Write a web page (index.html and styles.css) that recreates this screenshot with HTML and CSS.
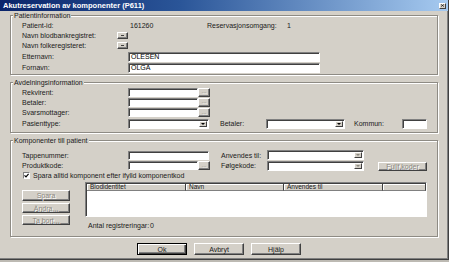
FILE: index.html
```html
<!DOCTYPE html>
<html lang="no">
<head>
<meta charset="utf-8">
<title>Akutreservation av komponenter (P611)</title>
<link rel="stylesheet" href="styles.css">
</head>
<body>
<div class="window">
  <div class="titlebar">
    <span class="title">Akutreservation av komponenter (P611)</span>
    <span class="close"><svg width="5" height="4" viewBox="0 0 5 4"><path d="M0 0L5 4M5 0L0 4" stroke="#000" stroke-width="1"/></svg></span>
  </div>
  <div class="content">
    <section class="group g1">
      <div class="gtitle">Patientinformation</div>
      <div class="row h10">
        <span class="lbl">Patient-id:</span>
        <span class="val">161260</span>
        <span class="lbl2">Reservasjonsomgang:</span>
        <span>1</span>
      </div>
      <div class="row h10">
        <span class="lbl short">Navn blodbankregistret:</span>
        <span class="btn mini"><i class="dash"></i></span>
      </div>
      <div class="row h11">
        <span class="lbl short">Navn folkeregisteret:</span>
        <span class="btn mini"><i class="dash"></i></span>
      </div>
      <div class="row h11">
        <span class="lbl">Etternavn:</span>
        <span class="input wname">OLESEN</span>
      </div>
      <div class="row h11">
        <span class="lbl">Fornavn:</span>
        <span class="input wname">OLGA</span>
      </div>
    </section>

    <section class="group g2">
      <div class="gtitle">Avdelningsinformation</div>
      <div class="row h10">
        <span class="lbl">Rekvirent:</span>
        <span class="input w70"></span><span class="btn dots disabled">...</span>
      </div>
      <div class="row h10">
        <span class="lbl">Betaler:</span>
        <span class="input w70"></span><span class="btn dots disabled">...</span>
      </div>
      <div class="row h11">
        <span class="lbl">Svarsmottager:</span>
        <span class="input w70"></span><span class="btn dots disabled">...</span>
      </div>
      <div class="row h11">
        <span class="lbl">Pasienttype:</span>
        <span class="combo w81"><span class="arrow"></span></span>
        <span class="lbl3 gapL11">Betaler:</span>
        <span class="combo w79"><span class="arrow"></span></span>
        <span class="lbl4">Kommun:</span>
        <span class="input w25 h10i"></span>
      </div>
    </section>

    <section class="group g3">
      <div class="gtitle">Komponenter till patient</div>
      <div class="row h10 first">
        <span class="lbl">Tappenummer:</span>
        <span class="input w81"></span>
        <span class="lbl3 gapL12">Anvendes til:</span>
        <span class="combo w97"><span class="arrow off"></span></span>
      </div>
      <div class="row h11">
        <span class="lbl">Produktkode:</span>
        <span class="input w70"></span><span class="btn dots disabled">...</span>
        <span class="lbl3 gapL11">Følgekode:</span>
        <span class="combo w97"><span class="arrow off"></span></span>
        <span class="btn fullf disabled">Fullf.koder</span>
      </div>
      <div class="row h8">
        <span class="check"><svg width="5" height="5" viewBox="0 0 5 5"><path d="M0.5 2.3L2 3.8L4.6 0.8" fill="none" stroke="#000" stroke-width="1.2"/></svg></span>
        <span>Spara alltid komponent efter ifylld komponentkod</span>
      </div>
      <div class="area">
        <div class="side">
          <span class="btn side-btn disabled">Spara</span>
          <span class="btn side-btn disabled">Ändra...</span>
          <span class="btn side-btn disabled">Ta bort...</span>
        </div>
        <div class="listcol">
          <div class="list">
            <div class="lhead">
              <span class="hcell c1">Blodidentitet</span>
              <span class="hcell c2">Navn</span>
              <span class="hcell c3">Anvendes til</span>
              <span class="hcell c4"></span>
            </div>
          </div>
          <div class="count"><span class="clbl">Antal registreringar:</span><span>0</span></div>
        </div>
      </div>
    </section>

    <div class="actions">
      <span class="btn action default">Ok</span>
      <span class="btn action">Avbryt</span>
      <span class="btn action">Hjälp</span>
    </div>
  </div>
</div>
</body>
</html>
```

FILE: styles.css
```css
* { box-sizing: border-box; margin: 0; padding: 0; }

body {
  width: 449px;
  height: 262px;
  overflow: hidden;
  background: #bdbab3;
  font: 7px/1 "Liberation Sans", Arial, sans-serif;
  color: #1a1a1a;
}

.window {
  width: 449px;
  height: 260px;
  background: #d4d0c8;
  border-right: 1px solid #404040;
  border-bottom: 1px solid #404040;
  box-shadow: inset -1px -1px #808080;
  display: flex;
  flex-direction: column;
}

.titlebar {
  height: 11px;
  flex: none;
  background: linear-gradient(to right, #0a246a 0%, #2a5598 40%, #a6caf0 100%);
  display: flex;
  align-items: center;
  justify-content: space-between;
  padding: 0 2px 0 3px;
}

.title {
  color: #fff;
  font-weight: bold;
  font-size: 7.5px;
  white-space: nowrap;
}

.close {
  width: 7px;
  height: 6px;
  background: #d4d0c8;
  border: 1px solid;
  border-color: #fff #404040 #404040 #fff;
  display: flex;
  align-items: center;
  justify-content: center;
}

.close svg { display: block; width: 3px; height: 3px; }

.content {
  padding: 4px 10px 0 10px;
  display: flex;
  flex-direction: column;
}

.group {
  border: 1px solid #8e8b84;
  box-shadow: inset 1px 1px #fff, 1px 1px #fff;
  padding: 0 10px 1px 11px;
  display: flex;
  flex-direction: column;
}

.g2 { margin-top: 7px; padding-bottom: 3px; }
.g3 { margin-top: 7px; padding-bottom: 7px; }

.gtitle {
  align-self: flex-start;
  margin: -5px 0 0 -9px;
  padding: 0 1px;
  height: 9px;
  line-height: 9px;
  background: #d4d0c8;
  white-space: nowrap;
}

.row {
  display: flex;
  align-items: center;
  white-space: nowrap;
}

.h8 { height: 8px; }
.h10 { height: 10px; }
.h11 { height: 11px; }
.first { margin-top: 5px; }

.lbl { width: 106px; flex: none; }
.lbl.short { width: 95px; }
.val { width: 79px; padding-left: 2px; }
.lbl2 { width: 80px; }
.lbl3 { width: 46px; flex: none; }
.gapL11 { margin-left: 11px; }
.gapL12 { margin-left: 12px; }
.lbl4 { width: 48px; margin-left: 9px; }

.btn {
  background: #d4d0c8;
  border: 1px solid;
  border-color: #fff #404040 #404040 #fff;
  box-shadow: inset -1px -1px #808080;
  display: flex;
  align-items: center;
  justify-content: center;
  flex: none;
}

.disabled {
  color: #8a877f;
  text-shadow: 1px 1px #fff;
}

.mini { width: 11px; height: 7px; }
.dash { display: block; width: 3px; height: 1px; background: #404040; }

.dots { width: 12px; height: 9px; font-size: 6px; line-height: 1; padding-bottom: 2px; }

.input, .combo {
  background: #fff;
  border: 1px solid;
  border-color: #808080 #fff #fff #808080;
  box-shadow: inset 1px 1px #404040;
  height: 9px;
  flex: none;
  display: flex;
  align-items: center;
  padding-left: 2px;
  color: #000;
  font-size: 7px;
  line-height: 8px;
}

.wname { width: 192px; height: 10px; padding-top: 1px; }
.w70 { width: 70px; }
.w81 { width: 81px; }
.w79 { width: 79px; }
.w97 { width: 97px; }
.w25 { width: 25px; }
.h10i { height: 10px; }

.combo {
  height: 10px;
  justify-content: flex-end;
  padding: 1px;
}

.arrow {
  width: 8px;
  height: 100%;
  background: #d4d0c8;
  border: 1px solid;
  border-color: #fff #404040 #404040 #fff;
  display: flex;
  align-items: center;
  justify-content: center;
}

.arrow::after {
  content: "";
  border-left: 2px solid transparent;
  border-right: 2px solid transparent;
  border-top: 2px solid #000;
}

.arrow.off::after { border-top-color: #8a877f; }

.fullf { width: 49px; height: 9px; margin-left: 14px; margin-top: 2px; }

.check {
  width: 7px;
  height: 7px;
  margin: 0 3px 0 1px;
  background: #fff;
  border: 1px solid;
  border-color: #808080 #fff #fff #808080;
  display: flex;
  align-items: center;
  justify-content: center;
}

.check svg { display: block; }

.area {
  display: flex;
  gap: 15px;
  margin-top: 2px;
}

.side {
  width: 48px;
  padding-top: 9px;
  display: flex;
  flex-direction: column;
  gap: 2px;
}

.side-btn { height: 11px; }
.side-btn + .side-btn { height: 10px; }

.listcol {
  width: 342px;
  display: flex;
  flex-direction: column;
}

.list {
  margin-top: 1px;
  height: 35px;
  background: #fff;
  border: 1px solid;
  border-color: #808080 #fff #fff #808080;
  box-shadow: inset 1px 1px #404040;
  padding: 1px 0 0 1px;
}

.lhead { display: flex; height: 7px; }

.hcell {
  height: 7px;
  background: #d4d0c8;
  border-right: 1px solid #404040;
  border-bottom: 1px solid #808080;
  box-shadow: inset 1px 1px #fff;
  padding-left: 3px;
  display: flex;
  align-items: center;
  font-size: 6.5px;
}

.c1 { width: 99px; }
.c2 { width: 98px; }
.c3 { width: 99px; }
.c4 { flex: 1; }

.count {
  margin-top: 4px;
  height: 8px;
  display: flex;
  align-items: center;
  padding-left: 3px;
}

.clbl { width: 62px; }

.actions {
  margin-top: 6px;
  display: flex;
  padding-left: 127px;
  gap: 7px;
}

.action { width: 50px; height: 12px; }
.default { border: 1px solid #000; box-shadow: inset 1px 1px #fff, inset -1px -1px #404040, inset -2px -2px #808080; }
```
